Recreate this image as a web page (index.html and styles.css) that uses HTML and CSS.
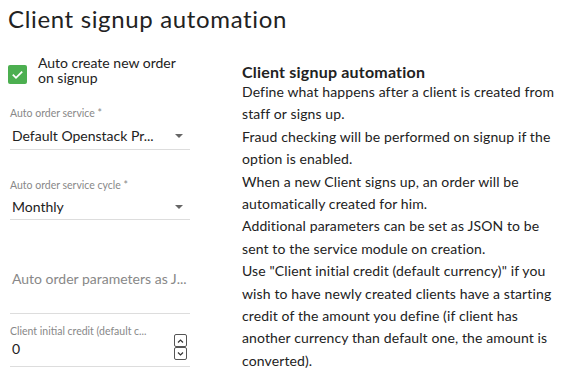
FILE: index.html
```html
<!DOCTYPE html>
<html>
<head>
<meta charset="utf-8">
<link rel="stylesheet" href="styles.css">
</head>
<body>
<h1 class="title">Client signup automation</h1>
<div class="layout">
  <div class="form">
    <label class="check">
      <span class="box"><svg width="19" height="19" viewBox="0 0 19 19"><path d="M4.8 9.6 L8 12.8 L14.2 6.6" fill="none" stroke="#fff" stroke-width="1.8"/></svg></span>
      <span class="check-text">Auto create new order on signup</span>
    </label>
    <div class="field">
      <div class="label">Auto order service *</div>
      <div class="control"><span class="value">Default Openstack Pr...</span><span class="caret"></span></div>
    </div>
    <div class="field second">
      <div class="label">Auto order service cycle *</div>
      <div class="control"><span class="value">Monthly</span><span class="caret"></span></div>
    </div>
    <div class="field tall">
      <div class="control placeholder"><span class="value">Auto order parameters as J...</span></div>
    </div>
    <div class="field last">
      <div class="label">Client initial credit (default c...</div>
      <div class="control"><span class="value">0</span>
        <span class="spin"><span class="spin-btn"><svg width="9" height="6" viewBox="0 0 9 6"><path d="M2 4.5 L4.5 2 L7 4.5" fill="none" stroke="#333" stroke-width="1.2"/></svg></span><span class="spin-btn"><svg width="9" height="6" viewBox="0 0 9 6"><path d="M2 1.5 L4.5 4 L7 1.5" fill="none" stroke="#333" stroke-width="1.2"/></svg></span></span>
      </div>
    </div>
  </div>
  <div class="help">
    <h2 class="help-title">Client signup automation</h2>
    <p>Define what happens after a client is created from staff or signs up.</p>
    <p>Fraud checking will be performed on signup if the option is enabled.</p>
    <p>When a new Client signs up, an order will be automatically created for him.</p>
    <p>Additional parameters can be set as JSON to be sent to the service module on creation.</p>
    <p>Use "Client initial credit (default currency)" if you wish to have newly created clients have a starting credit of the amount you define (if client has another currency than default one, the amount is converted).</p>
  </div>
</div>
</body>
</html>
```

FILE: styles.css
```css
html, body {
  margin: 0;
  padding: 0;
  background: #fff;
}
body {
  padding: 0 8px;
  font-family: Lato, "Liberation Sans", sans-serif;
  color: #333;
}
.title {
  margin: 0;
  padding-top: 4px;
  font-size: 24px;
  font-weight: 400;
  line-height: 30px;
  color: #222;
  letter-spacing: 0.65px;
}
.layout {
  display: grid;
  grid-template-columns: 182px 322px;
  column-gap: 52px;
  margin-top: 21px;
}
.form {
  display: flex;
  flex-direction: column;
}
.check {
  display: flex;
  align-items: flex-start;
  gap: 11px;
}
.box {
  flex: none;
  width: 19px;
  height: 19px;
  margin-top: 10px;
  background: #4caf50;
  border-radius: 2px;
  display: flex;
}
.check-text {
  font-size: 14px;
  line-height: 15px;
  color: #222;
}
.field {
  margin-left: 2px;
  border-bottom: 1px solid #ddd;
  margin-top: 22px;
}
.field.second {
  margin-top: 29px;
}
.field.second .label {
  margin-bottom: 3px;
}
.field.second .control {
  height: 25px;
}
.label {
  font-size: 10.5px;
  line-height: 12px;
  color: #888;
  margin-bottom: 4px;
}
.control {
  display: flex;
  align-items: center;
  height: 26px;
  font-size: 14px;
  line-height: 18px;
  color: #222;
  padding-left: 2px;
}
.field.tall {
  margin-top: 0;
}
.field.tall .control {
  height: auto;
  padding-top: 50px;
  padding-bottom: 25px;
}
.field.last {
  margin-top: 11px;
}
.field.last .label {
  margin-bottom: 0;
}
.field.last .control {
  height: 29px;
  align-items: flex-start;
}
.field.last .value {
  padding-top: 3px;
}
.value {
  flex: 1;
  white-space: nowrap;
}
.placeholder {
  color: #888;
}
.caret {
  width: 0;
  height: 0;
  border-left: 4px solid transparent;
  border-right: 4px solid transparent;
  border-top: 4px solid #666;
  margin-right: 7px;
}
.spin {
  display: flex;
  flex-direction: column;
  margin-right: 3px;
  margin-top: -3px;
}
.spin-btn {
  width: 11px;
  height: 11px;
  border: 1px solid #555;
  border-radius: 2px;
  display: flex;
  align-items: center;
  justify-content: center;
}
.help {
  padding-top: 8px;
  font-size: 14px;
  line-height: 22.4px;
  letter-spacing: 0.12px;
  color: #222;
}
.help-title {
  margin: 0;
  font-size: 16px;
  font-weight: 700;
  line-height: 18px;
  letter-spacing: 0.2px;
}
.help p {
  margin: 0;
}
```
